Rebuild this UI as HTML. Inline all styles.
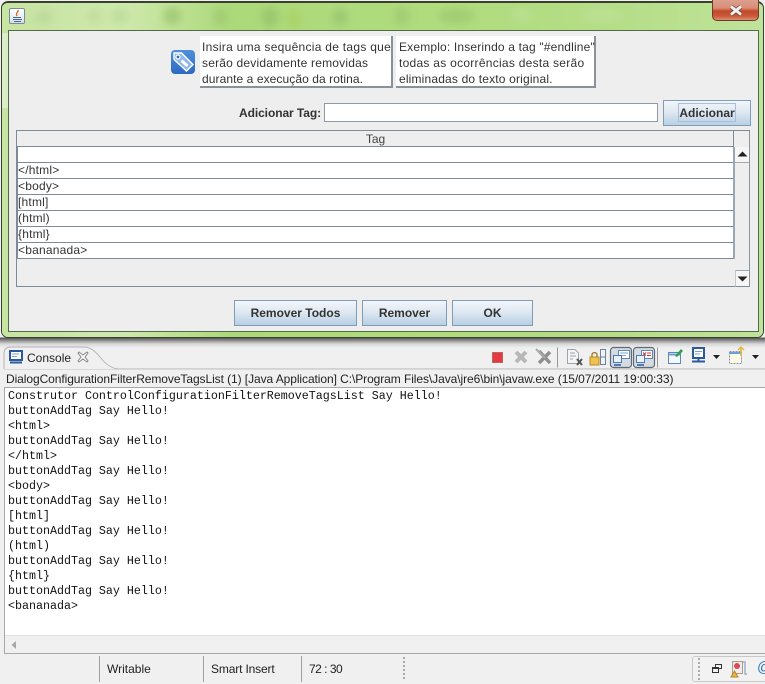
<!DOCTYPE html>
<html><head><meta charset="utf-8">
<style>
html,body{margin:0;padding:0;background:#f0f0f0}
#p{position:relative;width:765px;height:684px;overflow:hidden;background:#f0f0f0;font-family:"Liberation Sans",sans-serif;color:#333}
#p div,#p svg{position:absolute}
.t{white-space:pre;font-size:12px;line-height:16px}
.box{background:#fff;border-right:2px solid #8b9199;border-bottom:2px solid #8b9199;box-sizing:border-box}
.row{left:17px;width:717px;height:16px;background:#fff;border-bottom:1px solid #7d8a99;box-sizing:border-box;font-size:12px;line-height:15px;padding-left:1px;letter-spacing:.2px;color:#333;white-space:pre}
.btn{box-sizing:border-box;border:1px solid #7f9db9;background:linear-gradient(#f3f6fa,#dfe8f2 45%,#b8cfe5);text-align:center;font-weight:bold;font-size:12px;color:#333;line-height:24px}
.con{left:8px;font:11.67px/15px "Liberation Mono",monospace;color:#111;white-space:pre}
.ui{font-size:12px;color:#222;white-space:pre;line-height:16px}
.sep{width:1px;background:#a0a0a0}
</style></head><body>
<div id="p">
<!-- window frame -->
<div style="left:0;top:0;width:765px;height:348px;background:linear-gradient(#f0f0f0 337px,#555 338px,#9a9a9a 341px,#d8d8d8 344px,#f0f0f0 348px)"></div>
<div style="left:1px;top:1px;width:763px;height:337px;box-sizing:border-box;border-radius:7px;background:#aedb7c;border:1px solid #39402f;border-top-width:2px;overflow:hidden">
  <svg style="left:0;top:0" width="761" height="334" viewBox="0 0 761 334">
    <defs>
      <linearGradient id="g" x1="0" x2="1" y1="0" y2="0">
        <stop offset="0" stop-color="#c6e4a2"/><stop offset=".16" stop-color="#cfe9ad"/><stop offset=".3" stop-color="#acd97a"/><stop offset=".6" stop-color="#b0dc7e"/><stop offset=".8" stop-color="#b5dd87"/><stop offset="1" stop-color="#bfe39a"/>
      </linearGradient>
      <filter id="b"><feGaussianBlur stdDeviation="4"/></filter>
    </defs>
    <rect width="761" height="334" fill="url(#g)"/>
    <rect x="0" y="30" width="8" height="75" fill="#dbeec8"/>
    <g filter="url(#b)" fill="#8db765" opacity=".38">
      <ellipse cx="42" cy="14" rx="9" ry="7" fill="#a9c78f"/>
      <ellipse cx="93" cy="13" rx="7" ry="7" fill="#b6c98c"/>
      <ellipse cx="118" cy="13" rx="8" ry="8" fill="#a5cd83"/>
      <ellipse cx="170" cy="13" rx="9" ry="9" fill="#79a84f"/>
      <ellipse cx="218" cy="14" rx="7" ry="9"/>
      <ellipse cx="268" cy="14" rx="9" ry="10" fill="#7fae58"/>
      <ellipse cx="292" cy="16" rx="8" ry="9" fill="#a8c94a"/>
      <ellipse cx="338" cy="14" rx="7" ry="8" fill="#7da763"/>
      <ellipse cx="400" cy="13" rx="8" ry="9"/>
      <ellipse cx="455" cy="13" rx="18" ry="8"/>
      <ellipse cx="520" cy="12" rx="10" ry="6" fill="#c9e5a8"/>
      <ellipse cx="600" cy="12" rx="20" ry="7" fill="#c7e5a5"/>
    </g>
  </svg>
</div>
<!-- java icon -->
<div style="left:9px;top:8px;width:16px;height:16px;box-sizing:border-box;border:1px solid #7c8a9a;border-radius:2px;background:linear-gradient(#fff,#d8dfe8)"></div>
<svg style="left:10px;top:9px" width="15" height="14" viewBox="0 0 15 14"><path d="M8 1C9 3 5 4 7 7" stroke="#d9682a" stroke-width="1.300" fill="none"/><path d="M3 8.500h8M3 10.500h9M4 12.500h7" stroke="#45688f" stroke-width="1"/></svg>
<!-- close -->
<div style="left:712px;top:0;width:47px;height:21px;box-sizing:border-box;border:1px solid #6f3a2c;border-top:0;border-radius:0 0 5px 5px;background:linear-gradient(#dba08f,#d98d78 40%,#c4492a 55%,#c85a3a 80%,#dc8d70)"></div>
<svg style="left:729px;top:5px" width="14" height="11" viewBox="0 0 14 11"><path d="M2 1.500L12 9.500M12 1.500L2 9.500" stroke="#3a3a3a" stroke-width="4.500" opacity=".6"/><path d="M2 1.500L12 9.500M12 1.500L2 9.500" stroke="#f2f2f2" stroke-width="2.800"/></svg>
<!-- content pane -->
<div style="left:8px;top:30px;width:751px;height:302px;box-sizing:border-box;background:#eeeeee;border:1px solid #53694a"></div>
<!-- tag icon -->
<svg style="left:171px;top:50px" width="24" height="24" viewBox="0 0 24 24"><defs><linearGradient id="ic" x1="0" y1="0" x2="0" y2="1"><stop offset="0" stop-color="#4f8fdc"/><stop offset="1" stop-color="#2d6ac0"/></linearGradient></defs><rect width="24" height="24" rx="4" fill="url(#ic)"/><path d="M3 3H10.500L22 14.500L15.500 21L3 9.500Z" fill="#8fb8ea" stroke="#fff" stroke-width="1.400"/><circle cx="7" cy="7" r="2" fill="#2d6ac0" stroke="#fff" stroke-width="1.200"/><path d="M10.500 10.500L16.500 16" stroke="#fff" stroke-width="3"/></svg>
<!-- help text -->
<div class="box" style="left:200px;top:36px;width:193px;height:52px"></div>
<div class="t" style="left:202px;top:39px"><span style="letter-spacing:.28px">Insira uma sequência de tags que</span>
<span style="letter-spacing:.2px">serão devidamente removidas</span>
<span style="letter-spacing:.08px">durante a execução da rotina.</span></div>
<div class="box" style="left:396px;top:36px;width:200px;height:52px"></div>
<div class="t" style="left:399px;top:39px"><span style="letter-spacing:.17px">Exemplo: Inserindo a tag "#endline"</span>
<span style="letter-spacing:.27px">todas as ocorrências desta serão</span>
<span style="letter-spacing:.17px">eliminadas do texto original.</span></div>
<!-- add row -->
<div class="t" style="left:239px;top:105px;font-weight:bold;color:#333;letter-spacing:-.08px">Adicionar Tag:</div>
<div style="left:324px;top:103px;width:334px;height:19px;box-sizing:border-box;background:#fff;border:1px solid #8f9aa5"></div>
<div class="btn" style="left:663px;top:100px;width:88px;height:26px"></div>
<div style="left:678px;top:103px;width:58px;height:19px;box-sizing:border-box;border:1px solid #a9bed6;text-align:center;font:bold 12px/18px 'Liberation Sans',sans-serif;color:#333;white-space:nowrap">Adicionar</div>
<!-- table -->
<div style="left:16px;top:130px;width:734px;height:157px;box-sizing:border-box;border:1px solid #7d8a99;border-top-width:1px;background:#eeeeee"></div>
<div style="left:17px;top:131px;width:717px;height:16px;box-sizing:border-box;border-bottom:1px solid #7d8a99;text-align:center;font-size:12px;line-height:16px;color:#444">Tag</div>
<div style="left:733px;top:131px;width:1px;height:16px;background:#7d8a99"></div>
<div class="row" style="top:147px"></div>
<div class="row" style="top:163px">&lt;/html&gt;</div>
<div class="row" style="top:179px">&lt;body&gt;</div>
<div class="row" style="top:195px">[html]</div>
<div class="row" style="top:211px">(html)</div>
<div class="row" style="top:227px">{html}</div>
<div class="row" style="top:243px">&lt;bananada&gt;</div>
<div style="left:17px;top:147px;width:1px;height:112px;background:#7d8a99"></div>
<div style="left:733px;top:147px;width:2px;height:112px;background:#9aa6b3"></div>
<!-- scrollbar -->
<div style="left:735px;top:147px;width:15px;height:16px;box-sizing:border-box;background:#f6f6f6;border-bottom:1px solid #a0a8b0"></div>
<div style="left:735px;top:270px;width:15px;height:17px;box-sizing:border-box;background:#f6f6f6;border-top:1px solid #a0a8b0;border-left:1px solid #c4c8cc;border-bottom:1px solid #7d8a99"></div>
<div style="left:749px;top:131px;width:1px;height:156px;background:#8d969f"></div>
<svg style="left:736px;top:150px" width="14" height="8"><path d="M1.500 6.500L6.500 1.500L11.500 6.500Z" fill="#222"/></svg>
<svg style="left:736px;top:275px" width="14" height="8"><path d="M1.500 1.500L6.500 6.500L11.500 1.500Z" fill="#222"/></svg>
<!-- bottom buttons -->
<div class="btn" style="left:234px;top:300px;width:123px;height:26px">Remover Todos</div>
<div class="btn" style="left:362px;top:300px;width:85px;height:26px">Remover</div>
<div class="btn" style="left:452px;top:300px;width:81px;height:26px">OK</div>
<!-- console tab -->
<svg style="left:0;top:344px" width="765" height="26" viewBox="0 0 765 26"><path d="M4 25V9Q4 3 12 3H84Q92 3 100 13Q109 25 120 25H765" fill="none" stroke="#b5b5b5"/></svg>
<svg style="left:9px;top:350px" width="14" height="14" viewBox="0 0 14 14"><rect x="1" y="1" width="12" height="9" fill="#fff" stroke="#2b5a9b" stroke-width="2"/><path d="M3 4h7M3 6.500h5" stroke="#7aa0d0"/><path d="M1 12.500h12" stroke="#2b5a9b" stroke-width="2"/></svg>
<div class="ui" style="left:27px;top:350px">Console</div>
<svg style="left:77px;top:351px" width="12" height="12" viewBox="0 0 12 12"><path d="M2 1L6 4L10 1L11 2L8 6L11 10L10 11L6 8L2 11L1 10L4 6L1 2Z" fill="#fff" stroke="#888"/></svg>
<!-- toolbar -->
<svg style="left:480px;top:345px" width="285" height="24" viewBox="0 0 285 24">
  <rect x="12.500" y="7.500" width="10" height="10" fill="#e8383f" stroke="#b4666a"/>
  <path d="M36 7L46 17M46 7L36 17" stroke="#b8b8b8" stroke-width="4"/>
  <path d="M59 6L70 18M70 7L59 18" stroke="#8f8f8f" stroke-width="3.500"/><path d="M56 4L65 13" stroke="#aaa" stroke-width="2"/>
  <path d="M77.500 2.500V22.500" stroke="#999"/>
  <path d="M87.500 4.500H95L98.500 8V18.500H87.500Z" fill="#f4f4f4" stroke="#9aa4b0"/><path d="M90 8h5M90 11h6M90 14h3" stroke="#9aa4b0"/><path d="M97 14L102 20M102 14L97 20" stroke="#555" stroke-width="2"/>
  <rect x="110" y="12" width="9" height="8" fill="#f1c24e" stroke="#b78b24"/><path d="M112 12V9Q114.500 6 117 9V12" fill="none" stroke="#9a7a2a" stroke-width="1.300"/>
  <rect x="120.500" y="4.500" width="5" height="15" fill="#eef3f8" stroke="#6f8299"/><path d="M121 12h4" stroke="#6f8299"/>
  <rect x="130.500" y="2.500" width="21" height="20" rx="3" fill="#d5dbe2" stroke="#5f6a75" stroke-width="1.200"/>
  <rect x="153.500" y="2.500" width="21" height="20" rx="3" fill="#d5dbe2" stroke="#5f6a75" stroke-width="1.200"/>
  <rect x="138.500" y="5.500" width="11" height="8" fill="#fff" stroke="#5d87b8"/><path d="M140 8h8M140 10.500h6" stroke="#7aa0d0"/>
  <rect x="133.500" y="10.500" width="8" height="7" fill="#eaf1f9" stroke="#4a79b4"/><path d="M134 20h7" stroke="#2b5a9b" stroke-width="1.500"/>
  <rect x="161.500" y="5.500" width="11" height="8" fill="#fff" stroke="#5d87b8"/><path d="M163 7.500L166 10.500M166 7.500L163 10.500" stroke="#d43a3a"/><path d="M167 8h4M167 10.500h4" stroke="#d43a3a"/>
  <rect x="156.500" y="10.500" width="8" height="7" fill="#eaf1f9" stroke="#4a79b4"/><path d="M157 20h7" stroke="#2b5a9b" stroke-width="1.500"/>
  <path d="M177.500 2.500V22.500" stroke="#999"/>
  <rect x="188.500" y="7.500" width="12" height="11" fill="#f4f8fc" stroke="#5d87b8"/><path d="M189 9.500h11" stroke="#6ba1d8" stroke-width="2"/><path d="M195 11L201 4L203 6L197 12Z" fill="#2aa04a"/>
  <rect x="213" y="3" width="11" height="10" fill="#fff" stroke="#2b5a9b" stroke-width="2"/><path d="M215 6.500h7M215 9h5" stroke="#7aa0d0"/><path d="M212 16.500h13" stroke="#2b5a9b" stroke-width="2"/><path d="M218.500 13v3" stroke="#2b5a9b" stroke-width="2"/>
  <path d="M233 10L240 10L236.500 14Z" fill="#222"/>
  <rect x="249.500" y="6.500" width="12" height="12" fill="#fdfbe8" stroke="#8b93a0" stroke-dasharray="2 1"/><path d="M249 8h12" stroke="#6ba1d8" stroke-width="2"/><path d="M261 2V11M258 5L261 2L264 5" fill="none" stroke="#e0b83a" stroke-width="1.500"/>
  <path d="M272 10L279 10L275.500 14Z" fill="#222"/>
</svg>
<!-- console info -->
<div style="left:4px;top:369px;width:761px;height:1px;background:#d8d8d8"></div>
<div class="ui" style="left:6px;top:371px;letter-spacing:-.075px">DialogConfigurationFilterRemoveTagsList (1) [Java Application] C:\Program Files\Java\jre6\bin\javaw.exe (15/07/2011 19:00:33)</div>
<!-- console -->
<div style="left:4px;top:387px;width:761px;height:1px;background:#a8a8a8"></div>
<div style="left:4px;top:388px;width:1px;height:265px;background:#a8a8a8"></div>
<div style="left:5px;top:388px;width:760px;height:247px;background:#fff;border-bottom:1px solid #e2e2e2"></div>
<div class="con" style="top:389px">Construtor ControlConfigurationFilterRemoveTagsList Say Hello!
buttonAddTag Say Hello!
&lt;html&gt;
buttonAddTag Say Hello!
&lt;/html&gt;
buttonAddTag Say Hello!
&lt;body&gt;
buttonAddTag Say Hello!
[html]
buttonAddTag Say Hello!
(html)
buttonAddTag Say Hello!
{html}
buttonAddTag Say Hello!
&lt;bananada&gt;</div>
<svg style="left:10px;top:640px" width="8" height="10"><path d="M6 1V9L1.500 5Z" fill="#a8a8a8"/></svg>
<div style="left:4px;top:653px;width:761px;height:1px;background:#a8a8a8"></div>
<!-- status bar -->
<div class="sep" style="left:99px;top:656px;height:26px"></div>
<div class="sep" style="left:203px;top:656px;height:26px"></div>
<div class="sep" style="left:301px;top:656px;height:26px"></div>
<div class="ui" style="left:107px;top:661px">Writable</div>
<div class="ui" style="left:211px;top:661px;letter-spacing:-.15px">Smart Insert</div>
<div class="ui" style="left:309px;top:661px;letter-spacing:-.5px">72 : 30</div>
<div style="left:403px;top:657px;width:2px;height:22px;background:repeating-linear-gradient(#aaa 0 2px,transparent 2px 4px)"></div>
<div style="left:692px;top:656px;width:80px;height:26px;box-sizing:border-box;border:1px solid #c8c8c8;border-radius:3px;background:#f2f2f2"></div>
<div style="left:698px;top:658px;width:2px;height:22px;background:repeating-linear-gradient(#aaa 0 2px,transparent 2px 4px)"></div>
<svg style="left:711px;top:658px" width="40" height="20" viewBox="0 0 40 20">
  <rect x="4.500" y="6.500" width="6" height="4" fill="none" stroke="#333"/><rect x="1.500" y="9.500" width="6" height="5" fill="#f2f2f2" stroke="#333"/><path d="M2 10.500h5" stroke="#333"/>
  <rect x="21.500" y="3.500" width="10" height="12" fill="#eee" stroke="#b09a80"/><circle cx="26" cy="8" r="3" fill="#e2475a"/>
  <path d="M32 4h2v12h2" fill="none" stroke="#9ab0cc" stroke-width="1.500"/>
  <path d="M23.500 13L27 19H20Z" fill="#f0b840" stroke="#b5852a"/>
</svg>
<div style="left:757px;top:659px;font:15px/18px 'Liberation Sans',sans-serif;color:#2a78b8">@</div>
</div>
</body></html>
